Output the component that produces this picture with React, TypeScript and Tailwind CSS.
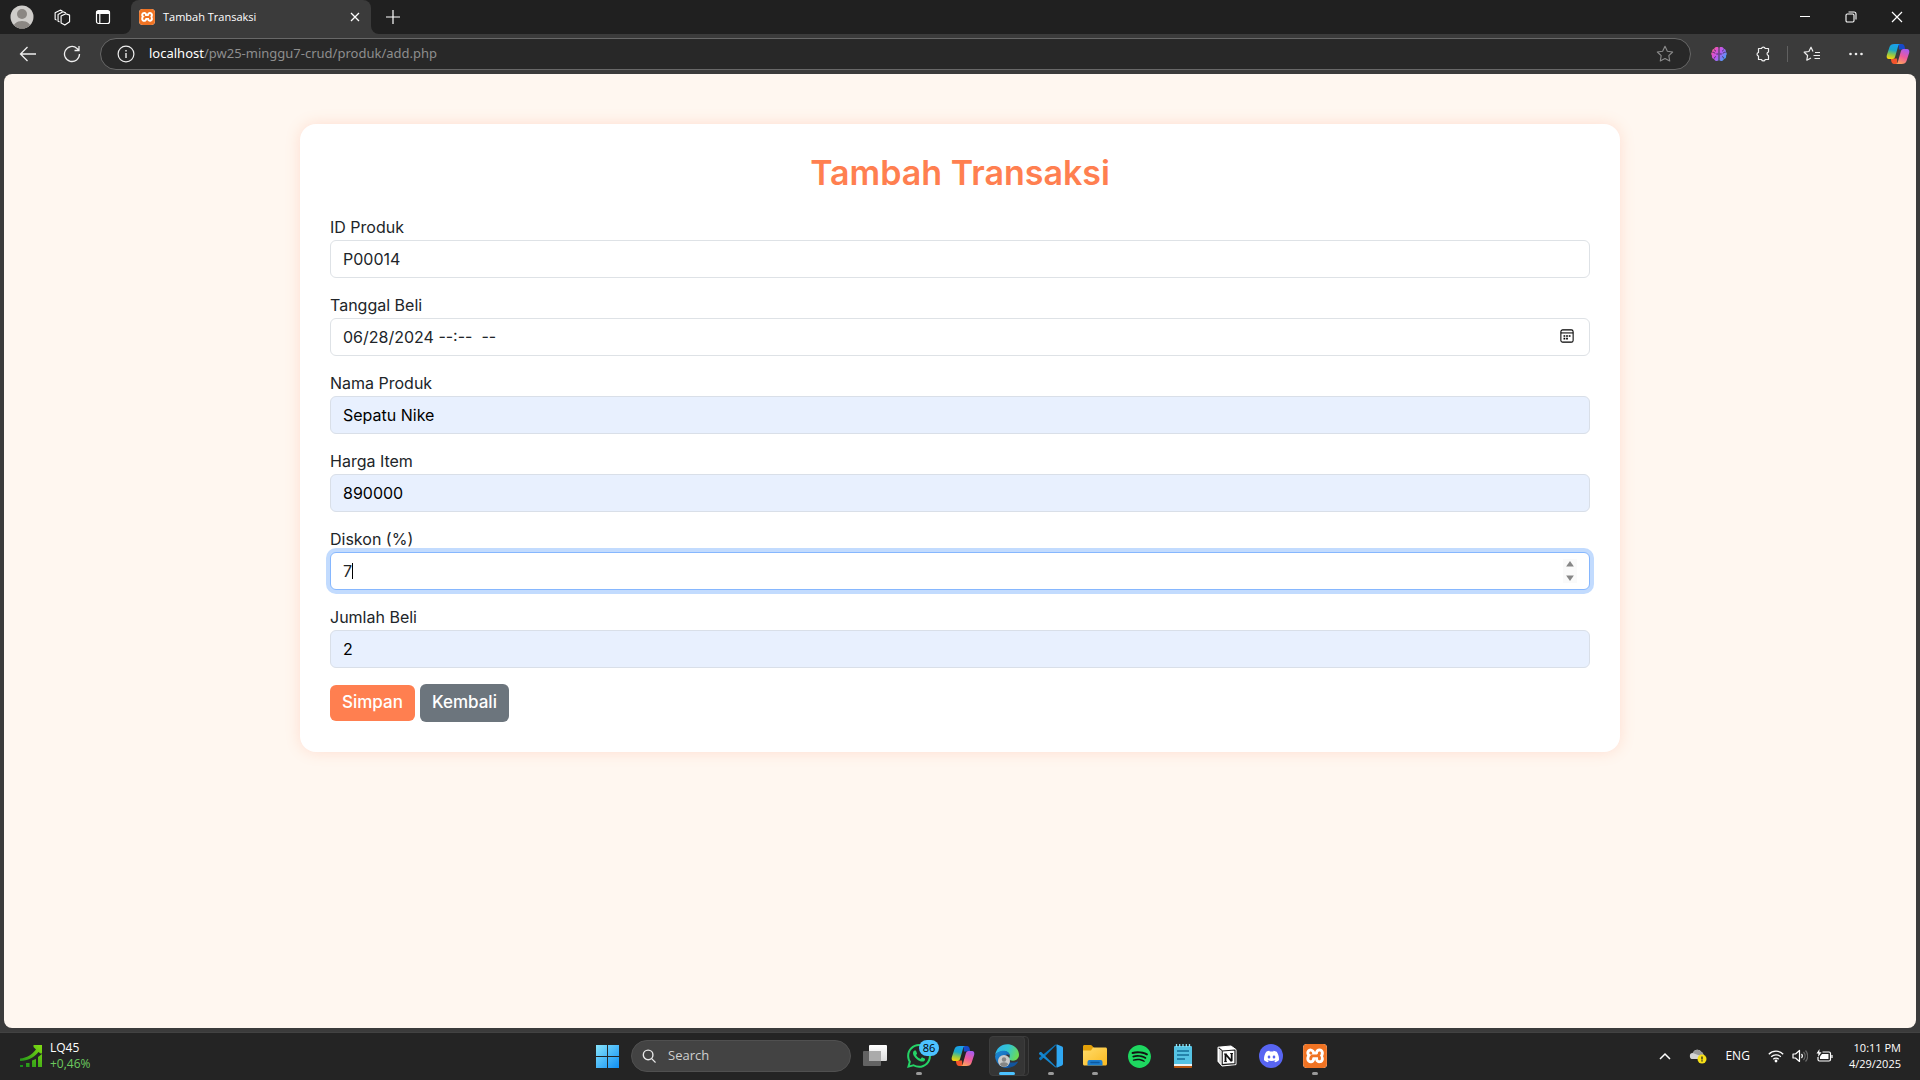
import React, { useId, useState } from "react";
import { SiDiscord, SiSpotify, SiWhatsapp, SiXampp } from "react-icons/si";

function CopilotIcon({ className }: { className: string }) {
  const id = useId();
  return (
    <svg viewBox="0 0 24 24" className={className} aria-hidden="true">
      <defs>
        <linearGradient id={id + "a"} x1="0.5" y1="0" x2="0.3" y2="1">
          <stop offset="0" stopColor="#1aa0ee" />
          <stop offset="0.4" stopColor="#1ba8c8" />
          <stop offset="0.7" stopColor="#8fc84a" />
          <stop offset="1" stopColor="#f9d40a" />
        </linearGradient>
        <linearGradient id={id + "b"} x1="0.7" y1="0" x2="0.3" y2="1">
          <stop offset="0" stopColor="#a75bf0" />
          <stop offset="0.5" stopColor="#ee5a9c" />
          <stop offset="1" stopColor="#ffa35c" />
        </linearGradient>
      </defs>
      <path d="M12.500 2H16c1.500 0 2.200 1 2.600 2.400L19.300 7.500H13z" fill="#1749c9" />
      <path d="M11.500 22H8c-1.500 0-2.200-1-2.600-2.400L4.700 16.500H11z" fill="#f2542c" />
      <path d="M8.500 2h6c-1.300 0-2 .8-2.400 2.200L9.200 14.500C8.800 16 8 17 6.500 17H3C1 17 .3 15.200.8 13.200L3.500 5C4.200 3 5.500 2 8.500 2z" fill={`url(#${id}a)`} />
      <path d="M15.500 22h-6c1.300 0 2-.8 2.400-2.200l2.900-10.300C15.200 8 16 7 17.500 7H21c2 0 2.700 1.800 2.200 3.800L20.500 19c-.7 2-2 3-5 3z" fill={`url(#${id}b)`} />
    </svg>
  );
}

function BrainIcon() {
  return (
    <svg viewBox="0 0 16 16" className="size-4" aria-hidden="true">
      <defs>
        <linearGradient id="brain" gradientUnits="userSpaceOnUse" x1="0" y1="1" x2="16" y2="13">
          <stop offset="0" stopColor="#f8a03a" />
          <stop offset="0.250" stopColor="#e84fc4" />
          <stop offset="0.550" stopColor="#b35cf2" />
          <stop offset="1" stopColor="#2fb0f7" />
        </linearGradient>
      </defs>
      <path d="M7.500 1.500v13c-1.500.9-3.800.5-4.300-1.300C1.500 12.800.6 11.300 1 9.800-.1 8.600 0 6.700 1.200 5.800 1 4.200 1.900 3 3.200 2.800 3.700 1 6 .6 7.500 1.500zM8.500 1.500v13c1.500.9 3.800.5 4.300-1.300 1.700-.4 2.600-1.900 2.200-3.400 1.100-1.200 1-3.100-.2-4 .2-1.600-.7-2.800-2-3C12.300 1 10 .6 8.500 1.500z" fill="url(#brain)" />
      <path d="M3.300 3.500c.2 1 .8 1.400 1.700 1.500M1.500 6.500c1-.5 2.300 0 2.500 1M3.200 12.500c0-1 .7-1.800 1.800-1.800M5.300 8h2M12.700 3.500c-.2 1-.8 1.400-1.700 1.500M14.500 6.500c-1-.5-2.300 0-2.500 1M12.800 12.500c0-1-.7-1.800-1.800-1.800M8.700 8h2" fill="none" stroke="#4b3368" strokeWidth="1" />
    </svg>
  );
}

function EdgeIcon() {
  return (
    <svg viewBox="0 0 24 24" className="size-6" aria-hidden="true">
      <defs>
        <linearGradient id="edge-top" x1="0" y1="0.3" x2="1" y2="0.6">
          <stop offset="0" stopColor="#2fb4ee" />
          <stop offset="0.5" stopColor="#33c6d0" />
          <stop offset="1" stopColor="#6fdd4c" />
        </linearGradient>
        <linearGradient id="edge-low" x1="0" y1="0" x2="1" y2="1">
          <stop offset="0" stopColor="#1d8bd8" />
          <stop offset="1" stopColor="#0f4f9f" />
        </linearGradient>
      </defs>
      <path d="M.2 11C1 4.600 6 .2 12.200.2 19 .2 24 5 24 10.800c0 3.400-2.600 5.900-6 5.900-2.500 0-4.300-.9-4.300-1.900 0-.7 1.100-1 1.100-3 0-2.400-2.400-4.500-6-4.500C4.800 7.300 1.600 8.800.2 11z" fill="url(#edge-top)" />
      <path d="M.1 12.500C.5 9.200 4.200 6.800 8.600 6.800c3.500 0 6.200 2.200 6.300 4.900-1-.9-2.300-1.300-3.500-1-2.100.5-3.400 2.800-3 5.300.7 4.100 5 7 9.400 6.500A12 12 0 0 1 .1 12.500z" fill="url(#edge-low)" />
      <path d="M11.400 10.700c-2.700.6-3.900 3.300-3.100 6 1.300 4.600 6.100 6.800 9.700 5.700 2.100-.8 3.700-2.300 4.700-4.100.3-.6-.1-.9-.7-.6-3.900 1.900-9.600.8-10.800-2.800-.5-1.600-.5-3 .2-4.200z" fill="#12559f" />
    </svg>
  );
}

function UserBadge() {
  return (
    <svg viewBox="0 0 12 12" className="absolute bottom-2 left-2 size-3" aria-hidden="true">
      <circle cx="6" cy="6" r="6" fill="#c9c9c9" />
      <circle cx="6" cy="4.500" r="2.200" fill="#858585" />
      <path d="M2 9.800c0-1.800 1.800-2.500 4-2.500s4 .7 4 2.500A6 6 0 0 1 6 12a6 6 0 0 1-4-2.200z" fill="#858585" />
    </svg>
  );
}

function VsCodeIcon() {
  return (
    <svg viewBox="0 0 24 24" className="size-6" aria-hidden="true">
      <path d="M17.200 1 6 12.300 2.200 15.900a1 1 0 0 1-1.200 0l-.8-.8a1 1 0 0 1 0-1.300L16.500.5 18.500 2v5z" fill="#0a78bf" />
      <path d="M17.200 23 6 11.700 2.200 8.100a1 1 0 0 0-1.200 0l-.8.8a1 1 0 0 0 0 1.300l16.300 13.300 2-1.500v-5z" fill="#1687cf" />
      <path d="M17.600.3 23.100 2.600a1.500 1.500 0 0 1 .9 1.400v16a1.500 1.500 0 0 1-.9 1.400l-5.500 2.300z" fill="#2fa7f2" />
    </svg>
  );
}

function FolderIcon() {
  return (
    <svg viewBox="0 0 24 24" className="size-6" aria-hidden="true">
      <defs>
        <linearGradient id="folder" x1="0" y1="0" x2="1" y2="1">
          <stop offset="0" stopColor="#ffdc6b" />
          <stop offset="1" stopColor="#fbb91f" />
        </linearGradient>
      </defs>
      <path d="M0 2.500C0 1.600.6 1 1.500 1h6c.7 0 1.200.3 1.600.8L11 4v4H0z" fill="#e3a008" />
      <path d="M0 6.500h8L10 3.500h12.500c.9 0 1.500.6 1.500 1.500v15c0 .9-.6 1.500-1.500 1.500h-21C.6 21.500 0 20.900 0 20z" fill="url(#folder)" />
      <path d="M4.500 18a2 2 0 0 1 2-2h11a2 2 0 0 1 2 2v3.500h-15z" fill="#1d7fd0" />
      <path d="M8 18.500h8" stroke="#0d5aa0" strokeWidth="1.500" strokeLinecap="round" />
    </svg>
  );
}

function NotepadIcon() {
  return (
    <svg viewBox="0 0 18 24" className="h-6 w-[18px]" aria-hidden="true">
      <rect x="0" y="2" width="18" height="19" rx="1" fill="#55c3e4" />
      <path d="M0 20h18v2H0z" fill="#eef3f5" />
      <path d="M0 22h18v1.200a.8.8 0 0 1-.8.800H.8a.8.8 0 0 1-.8-.8z" fill="#b8560f" />
      <path d="M2.500 0v3M5.700 0v3M9 0v3M12.300 0v3M15.500 0v3" stroke="#8be3f7" strokeWidth="1.300" />
      <path d="M3 7h12M3 11h12M3 15h8" stroke="#146f98" strokeWidth="1.500" />
    </svg>
  );
}

function NotionIcon() {
  return (
    <svg viewBox="0 0 20 22" className="h-[22px] w-5" aria-hidden="true">
      <path d="M1 2.200 14 1l5 3.600v15l-14 1.400-4-4.600z" fill="#fff" stroke="#fff" strokeLinejoin="round" />
      <path d="M5.200 6 18 5v13.600L5.200 19.700z" fill="#fff" stroke="#1b1b1b" strokeWidth="1.200" strokeLinejoin="round" />
      <path d="M1.700 2.800 5.200 5.700" stroke="#1b1b1b" strokeWidth="1.100" />
      <path d="M2 4v12.200l2.200 2.500V6z" fill="#d9d9d9" />
      <path d="M8.500 9v7.500M8.500 9l6.200 7.300M14.700 8.500v7.800" stroke="#111" strokeWidth="1.800" fill="none" />
      <path d="M7 9h2.500M7.200 16.600h2.700M13.200 8.500H16" stroke="#111" strokeWidth="1" />
    </svg>
  );
}

function XamppIcon({ className }: { className: string }) {
  return (
    <span className={`grid place-items-center overflow-hidden bg-white ${className}`}>
      <SiXampp className="size-full text-[#f07323]" />
    </span>
  );
}

function TitleBar() {
  return (
    <header className="flex h-[34px] items-center bg-[#202020] text-white">
      <div className="flex w-[131px] items-center pl-2.5">
        <button aria-label="Profile" className="mr-5">
          <svg viewBox="0 0 24 24" className="size-6">
            <clipPath id="avatar"><circle cx="12" cy="12" r="11.500" /></clipPath>
            <g clipPath="url(#avatar)">
              <path d="M0 0h24v24H0z" fill="#cfcdca" />
              <circle cx="12" cy="9" r="5" fill="#8b8783" />
              <path d="M3 24c0-5 3.500-8 9-8s9 3 9 8z" fill="#8b8783" />
            </g>
          </svg>
        </button>
        <button aria-label="Workspaces" className="mr-6">
          <svg viewBox="0 0 18 18" className="size-[17px]" fill="none" stroke="currentColor" strokeWidth="1.200" strokeLinejoin="round" strokeLinecap="round">
            <path d="M7.500 7.500 12.500 5l4 1.500v7L11.500 17l-4-2.200zM7.500 7.500" />
            <path d="M5.500 13.500 4.300 13V5.800L9.500 3l2.700 1M2.300 11.500 1.200 10.800V4L6.500 1.200l2 .8" />
          </svg>
        </button>
        <button aria-label="Tab actions">
          <svg viewBox="0 0 16 16" className="size-4" fill="none" stroke="currentColor" strokeWidth="1.200">
            <rect x="1.500" y="1.500" width="13" height="13" rx="2" />
            <path d="M1.500 3.500h13" strokeWidth="3" />
            <path d="M4.800 5v9.500" />
          </svg>
        </button>
      </div>
      <div className="relative flex h-full w-60 items-center rounded-t-lg bg-[#3b3b3b] px-2">
        <svg viewBox="0 0 8 8" className="absolute bottom-0 -left-2 size-2"><path d="M8 0v8H0a8 8 0 0 0 8-8z" fill="#3b3b3b" /></svg>
        <svg viewBox="0 0 8 8" className="absolute -right-2 bottom-0 size-2"><path d="M0 0v8h8a8 8 0 0 1-8-8z" fill="#3b3b3b" /></svg>
        <XamppIcon className="size-4 rounded-sm" />
        <span className="ml-2 flex-1 text-[11px]">Tambah Transaksi</span>
        <button aria-label="Close tab" className="mr-0.5">
          <svg viewBox="0 0 12 12" className="size-3" stroke="currentColor" strokeWidth="1.300"><path d="m2 2 8 8M10 2l-8 8" /></svg>
        </button>
      </div>
      <button aria-label="New tab" className="ml-3.5">
        <svg viewBox="0 0 16 16" className="size-4" stroke="currentColor" strokeWidth="1.200"><path d="M8 1v14M1 8h14" /></svg>
      </button>
      <div className="ml-auto flex h-full">
        <button aria-label="Minimize" className="grid w-[46px] place-items-center">
          <svg viewBox="0 0 12 12" className="size-3" stroke="currentColor"><path d="M1 5.500h10" /></svg>
        </button>
        <button aria-label="Restore" className="grid w-[46px] place-items-center">
          <svg viewBox="0 0 12 12" className="size-3" fill="none" stroke="currentColor" strokeWidth="1.100"><rect x="1" y="3" width="8" height="8" rx="1.200" /><path d="M3.500 1H9a2 2 0 0 1 2 2v5.500" /></svg>
        </button>
        <button aria-label="Close" className="grid w-[46px] place-items-center">
          <svg viewBox="0 0 12 12" className="size-3" stroke="currentColor" strokeWidth="1.200"><path d="m1 1 10 10M11 1 1 11" /></svg>
        </button>
      </div>
    </header>
  );
}

const STAR = "m8 1.200 2.100 4.300 4.700.7-3.400 3.300.8 4.700L8 12l-4.200 2.200.8-4.700L1.200 6.200l4.700-.7z";

function Toolbar() {
  return (
    <nav className="flex h-10 items-center text-[#eeeeee]">
      <button aria-label="Back" className="grid w-11 place-items-center pl-3">
        <svg viewBox="0 0 18 18" className="size-[18px]" fill="none" stroke="currentColor" strokeWidth="1.300"><path d="M17 9H1.500M8.500 2l-7 7 7 7" /></svg>
      </button>
      <button aria-label="Refresh" className="grid w-14 place-items-center">
        <svg viewBox="0 0 18 18" className="size-[18px]" fill="none" stroke="currentColor" strokeWidth="1.300"><path d="M16.500 9A7.500 7.500 0 1 1 14 3.400L15.800 5M16 1v4.500h-4.500" /></svg>
      </button>
      <div className="flex h-8 flex-1 items-center rounded-full border border-[#686868] bg-[#282828] px-4">
        <svg viewBox="0 0 18 18" className="size-[18px]" fill="none" stroke="currentColor" strokeWidth="1.200"><circle cx="9" cy="9" r="7.900" /><path d="M9 8v5M9 5v1.600" strokeWidth="1.400" /></svg>
        <span className="ml-3.5 flex-1 font-['Noto_Sans',sans-serif] text-[13px] text-[#8e8e8e]"><span className="text-white">localhost</span>/pw25-minggu7-crud/produk/add.php</span>
        <button aria-label="Add to favorites" className="text-[#8b8b8b]">
          <svg viewBox="0 0 16 16" className="size-[18px]" fill="none" stroke="currentColor" strokeLinejoin="round"><path d={STAR} /></svg>
        </button>
      </div>
      <div className="flex items-center">
        <button aria-label="Brain extension" className="grid w-14 place-items-center"><BrainIcon /></button>
        <button aria-label="Extensions" className="grid w-8 place-items-center">
          <svg viewBox="0 0 16 16" className="size-4" fill="none" stroke="currentColor" strokeWidth="1.200" strokeLinejoin="round">
            <path d="M3.500 2.500H6.500a1.900 1.900 0 0 1 3.700 0H13.500V6a1.900 1.900 0 0 0 0 3.700v3.800h-3.300a1.900 1.900 0 0 1-3.700 0H3.500v-3.300a1.900 1.900 0 0 1 0-3.700z" />
          </svg>
        </button>
        <span className="mx-2 h-4 w-px bg-[#606060]" />
        <button aria-label="Favorites" className="grid w-8 place-items-center">
          <svg viewBox="0 0 18 16" className="h-4 w-[18px]" fill="none" stroke="currentColor" strokeWidth="1.200" strokeLinejoin="round">
            <path d="M10 5.500 8 1.200 5.900 5.500l-4.700.7 3.400 3.300-.8 4.700L8 12M12 6.500h5M10.500 9.500H17M11.500 12.500H17" />
          </svg>
        </button>
        <button aria-label="More" className="grid w-14 place-items-center">
          <svg viewBox="0 0 16 4" className="h-1 w-4" fill="currentColor"><circle cx="2.500" cy="2" r="1.300" /><circle cx="8" cy="2" r="1.300" /><circle cx="13.500" cy="2" r="1.300" /></svg>
        </button>
        <button aria-label="Copilot" className="mr-2.5 ml-0.5 grid place-items-center"><CopilotIcon className="size-6" /></button>
      </div>
    </nav>
  );
}

const field = "h-[38px] w-full rounded-md border px-3 text-[16px] outline-none";
const plain = "border-[#dee2e6] bg-white text-[#212529]";
const filled = "border-[#d9dfe8] bg-[#e8f0fe] text-black";

function Field({ id, label, children }: { id: string; label: string; children: React.ReactNode }) {
  return (
    <div className="mb-4">
      <label htmlFor={id} className="block pb-0.5 text-[16px] leading-[22px] text-[#212529]">{label}</label>
      <div className="relative">{children}</div>
    </div>
  );
}

function TransactionForm() {
  const [discount, setDiscount] = useState(7);
  return (
    <form className="mx-auto w-full max-w-[1320px] rounded-2xl bg-white p-[30px] font-[Inter,sans-serif] shadow-[0_0_15px_rgba(255,127,80,0.2)]">
      <h1 className="mb-6 text-center text-[34px] leading-[38px] font-semibold text-[#ff7f50]">Tambah Transaksi</h1>
      <Field id="id-produk" label="ID Produk">
        <input id="id-produk" type="text" defaultValue="P00014" className={`${field} ${plain}`} />
      </Field>
      <Field id="tanggal" label="Tanggal Beli">
        <input id="tanggal" type="text" defaultValue="06/28/2024 --:--  --" className={`${field} ${plain}`} />
        <button type="button" aria-label="Open calendar" className="absolute top-[11px] right-4 text-black">
          <svg viewBox="0 0 16 16" className="size-[14px]" fill="none" stroke="currentColor" strokeWidth="1.200">
            <rect x="1" y="1" width="14" height="14" rx="2" /><path d="M1 4.500h14" />
            <path d="M4 8h2M7 8h2M10 8h2M4 11h2M7 11h2" strokeWidth="1.800" />
          </svg>
        </button>
      </Field>
      <Field id="nama" label="Nama Produk">
        <input id="nama" type="text" defaultValue="Sepatu Nike" className={`${field} ${filled}`} />
      </Field>
      <Field id="harga" label="Harga Item">
        <input id="harga" type="text" defaultValue="890000" className={`${field} ${filled}`} />
      </Field>
      <Field id="diskon" label="Diskon (%)">
        <input
          id="diskon"
          type="number"
          value={discount}
          onChange={(e) => setDiscount(Number(e.target.value))}
          className={`${field} [appearance:textfield] border-[#86b7fe] bg-white text-[#212529] shadow-[0_0_0_4px_#c2dbfe]`}
        />
        <span className="absolute top-[11px] left-[22px] h-4 w-px bg-black" />
        <span className="absolute top-[7px] right-[13px] flex w-3.5 flex-col items-center justify-between gap-2 bg-[#fafafa] py-0.5 text-[#868686]">
          <button type="button" aria-label="Increase" onClick={() => setDiscount(discount + 1)}><svg viewBox="0 0 10 7" className="h-[6px] w-2.5" fill="currentColor"><path d="M5 0 9.500 6.500H.5z" /></svg></button>
          <button type="button" aria-label="Decrease" onClick={() => setDiscount(discount - 1)}><svg viewBox="0 0 10 7" className="h-[6px] w-2.5" fill="currentColor"><path d="M5 7 9.500.5H.5z" /></svg></button>
        </span>
      </Field>
      <Field id="jumlah" label="Jumlah Beli">
        <input id="jumlah" type="text" defaultValue="2" className={`${field} ${filled}`} />
      </Field>
      <div className="flex items-center gap-[5px] text-[17px] font-medium text-white">
        <button type="button" className="h-9 rounded-md bg-[#ff7f50] px-3">Simpan</button>
        <a href="#produk" className="grid h-[38px] place-items-center rounded-md bg-[#6c757d] px-3">Kembali</a>
      </div>
    </form>
  );
}

function TaskButton({ label, running, active, children }: { label: string; running?: boolean; active?: boolean; children: React.ReactNode }) {
  return (
    <button aria-label={label} className="relative grid h-12 w-11 place-items-center">
      {active && <span className="absolute top-1 left-[5px] h-10 w-[39px] rounded border border-[#3c3c3c] bg-[#292929]" />}
      <span className={active ? "absolute top-1 left-1 grid h-10 w-9 place-items-center rounded border border-[#3d3d3d] bg-[#353535]" : "grid place-items-center"}>
        {children}
      </span>
      {running && <span className={active ? "absolute bottom-[5px] left-3.5 h-[3px] w-4 rounded-full bg-[#4cc2ff]" : "absolute bottom-[5px] left-[19px] h-[3px] w-1.5 rounded-full bg-[#9a9a9a]"} />}
    </button>
  );
}

function Taskbar() {
  return (
    <footer className="grid h-12 grid-cols-[1fr_auto_1fr] items-center bg-[#242424] text-white shadow-[inset_0_1px_0_#424242]">
      <button className="flex items-center gap-2 pl-5 text-left">
        <svg viewBox="0 0 22 22" className="size-[22px]" aria-hidden="true">
          <defs><linearGradient id="market" x1="0" y1="1" x2="1" y2="0"><stop offset="0" stopColor="#148a1c" /><stop offset="1" stopColor="#82de12" /></linearGradient></defs>
          <path d="M0 13.500C7 13 12 9.500 16 4.500L13.500 2V0H22v8.500h-1.500L18.500 7C14 12.500 8 15.800 0 16zM0 20h3v2H0zM6 18h3.500v4H6zM12 15.500l4-1.500v8h-4zM18 12l4-3v13h-4z" fill="url(#market)" />
        </svg>
        <span className="flex flex-col text-[12px] leading-4"><span>LQ45</span><span className="text-[#6ccb5f]">+0,46%</span></span>
      </button>
      <div className="flex items-center pl-0.5">
        <TaskButton label="Start">
          <svg viewBox="0 0 24 24" className="size-[23px]">
            <defs><linearGradient id="win" gradientUnits="userSpaceOnUse" x1="0" y1="0" x2="24" y2="24"><stop offset="0" stopColor="#86e3fb" /><stop offset="1" stopColor="#0f8ff5" /></linearGradient></defs>
            <path d="M0 0h11.500v11.500H0zM12.500 0H24v11.500H12.500zM0 12.500h11.500V24H0zM12.500 12.500H24V24H12.500z" fill="url(#win)" />
          </svg>
        </TaskButton>
        <label className="mx-0.5 flex h-8 w-[220px] items-center gap-3 rounded-full border border-[#505050] bg-[#434343] pl-2.5">
          <svg viewBox="0 0 16 16" className="size-4" fill="none" stroke="#e8e8e8" strokeWidth="1.600"><circle cx="7" cy="6.800" r="5.500" /><path d="m11 11 4 4" strokeLinecap="round" /></svg>
          <input type="text" aria-label="Search" placeholder="Search" className="w-full bg-transparent text-[13px] outline-none placeholder:text-[#cfcfcf]" />
        </label>
        <TaskButton label="Task view">
          <svg viewBox="0 0 24 24" className="size-6">
            <defs><linearGradient id="tv" x1="0" y1="0" x2="0" y2="1"><stop offset="0" stopColor="#fff" /><stop offset="1" stopColor="#dcdcdc" /></linearGradient></defs>
            <rect x="6" y="1" width="18" height="16" rx="1" fill="url(#tv)" />
            <rect x="0" y="7" width="18" height="15" rx="1" fill="#636363" />
            <path d="M6 7h12v10H6z" fill="#ababab" />
          </svg>
        </TaskButton>
        <TaskButton label="WhatsApp" running>
          <SiWhatsapp className="size-6 text-[#25d366]" />
          <span className="absolute top-2 left-5.5 flex h-4 w-5 items-center justify-center rounded-full bg-[#4cc2ff] text-[11px] text-black">86</span>
        </TaskButton>
        <TaskButton label="Copilot"><CopilotIcon className="size-6" /></TaskButton>
        <TaskButton label="Microsoft Edge" running active><EdgeIcon /><UserBadge /></TaskButton>
        <TaskButton label="Visual Studio Code" running><VsCodeIcon /></TaskButton>
        <TaskButton label="File Explorer" running><FolderIcon /></TaskButton>
        <TaskButton label="Spotify"><span className="rounded-full bg-[#121212]"><SiSpotify className="size-[23px] text-[#1ed760]" /></span></TaskButton>
        <TaskButton label="Notepad"><NotepadIcon /></TaskButton>
        <TaskButton label="Notion"><NotionIcon /></TaskButton>
        <TaskButton label="Discord"><span className="grid size-6 place-items-center rounded-full bg-[#5865f2]"><SiDiscord className="size-[15px]" /></span></TaskButton>
        <TaskButton label="XAMPP" running><XamppIcon className="size-6 rounded-sm" /></TaskButton>
      </div>
      <div className="flex items-center justify-end pr-[19px]">
        <button aria-label="Hidden icons" className="mr-[18px]">
          <svg viewBox="0 0 12 12" className="size-3" fill="none" stroke="currentColor" strokeWidth="1.500"><path d="m1 9 5-5 5 5" /></svg>
        </button>
        <button aria-label="OneDrive" className="mr-[18px]">
          <svg viewBox="0 0 18 16" className="h-4 w-[18px]">
            <path d="M4 11a3 3 0 0 1-.3-6A5 5 0 0 1 12.500 4 3.500 3.500 0 0 1 14 9l-2 2z" fill="#d4d4d4" />
            <path d="M3.700 5A5 5 0 0 1 12.500 4a3.800 3.800 0 0 1 2 3l-4 .5z" fill="#9a9a9a" />
            <circle cx="13" cy="11" r="4.500" fill="#f7e017" /><path d="M13 8.500v3M13 12.300v1.200" stroke="#222" strokeWidth="1.300" />
          </svg>
        </button>
        <span className="mr-[18px] text-[12px]">ENG</span>
        <button aria-label="Network, volume, battery" className="mr-4 flex items-center gap-2">
          <svg viewBox="0 0 16 14" className="h-3.5 w-4" fill="none" stroke="currentColor" strokeWidth="1.300"><path d="M.8 5.200a10.200 10.200 0 0 1 14.400 0M3.200 7.800a6.800 6.800 0 0 1 9.600 0M5.300 10.200a3.800 3.800 0 0 1 5.400 0" /><circle cx="8" cy="12" r="1.400" fill="currentColor" stroke="none" /></svg>
          <svg viewBox="0 0 16 14" className="h-3.5 w-4" fill="none" stroke="currentColor" strokeWidth="1.200"><path d="M1 5h2.500L7.500 1.500v11L3.500 9H1z" strokeLinejoin="round" /><path d="M9.500 5a3 3 0 0 1 0 4" /><path d="M11.500 3a6 6 0 0 1 0 8M13.500 1.500a8 8 0 0 1 0 11" stroke="#6a6a6a" /></svg>
          <svg viewBox="0 0 17 14" className="h-3.5 w-[17px]" fill="none" stroke="currentColor" strokeWidth="1.200"><path d="M6.500 3H13a1.500 1.500 0 0 1 1.500 1.500v6A1.500 1.500 0 0 1 13 12H3.500A1.500 1.500 0 0 1 2 10.500V8M16 6v3" /><path d="M6 5h6.500v5H4V7.500z" fill="currentColor" stroke="none" /><path d="M3.500 0 .5 4.500h2L2 8l3.500-4.700h-2.200z" fill="currentColor" stroke="none" /></svg>
        </button>
        <span className="flex flex-col text-right text-[11px] leading-4"><span>10:11 PM</span><span>4/29/2025</span></span>
      </div>
    </footer>
  );
}

export default function App() {
  return (
    <div className="flex min-h-screen flex-col bg-[#3b3b3b] font-['Open_Sans','Noto_Sans',sans-serif]">
      <TitleBar />
      <Toolbar />
      <main className="mx-1 mb-1 flex-1 rounded-lg bg-[#fff7f0] px-3 pt-[50px] pb-12">
        <TransactionForm />
      </main>
      <Taskbar />
    </div>
  );
}
